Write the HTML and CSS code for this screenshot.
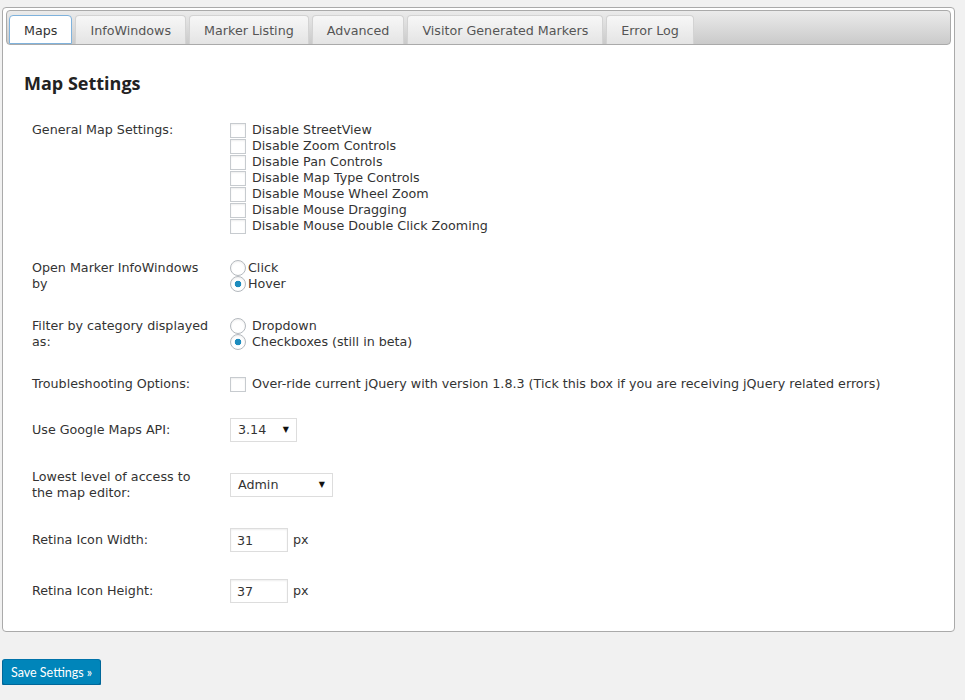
FILE: index.html
```html
<!DOCTYPE html>
<html lang="en">
<head>
  <meta charset="UTF-8" />
  <title>Map Settings</title>
  <link rel="stylesheet" href="styles.css">
</head>
<body>
  <div class="wrap">

    <!-- Tabs -->
    <div class="tabs">
      <ul class="tab-nav">
        <li class="tab active">Maps</li>
        <li class="tab">InfoWindows</li>
        <li class="tab">Marker Listing</li>
        <li class="tab">Advanced</li>
        <li class="tab">Visitor Generated Markers</li>
        <li class="tab">Error Log</li>
      </ul>

      <!-- Maps panel -->
      <div class="tab-panel">
        <h3>Map Settings</h3>

        <div class="form-rows">
          <div class="form-row">
            <div class="row-label">General Map Settings:</div>
            <div class="row-field">
              <label class="opt"><input type="checkbox" />Disable StreetView</label>
              <label class="opt"><input type="checkbox" />Disable Zoom Controls</label>
              <label class="opt"><input type="checkbox" />Disable Pan Controls</label>
              <label class="opt"><input type="checkbox" />Disable Map Type Controls</label>
              <label class="opt"><input type="checkbox" />Disable Mouse Wheel Zoom</label>
              <label class="opt"><input type="checkbox" />Disable Mouse Dragging</label>
              <label class="opt"><input type="checkbox" />Disable Mouse Double Click Zooming</label>
            </div>
          </div>

          <div class="form-row">
            <div class="row-label">Open Marker InfoWindows by</div>
            <div class="row-field">
              <label class="opt tight"><input type="radio" name="open_by" />Click</label>
              <label class="opt tight"><input type="radio" name="open_by" checked />Hover</label>
            </div>
          </div>

          <div class="form-row">
            <div class="row-label">Filter by category displayed as:</div>
            <div class="row-field">
              <label class="opt"><input type="radio" name="filter_as" />Dropdown</label>
              <label class="opt"><input type="radio" name="filter_as" checked />Checkboxes (still in beta)</label>
            </div>
          </div>

          <div class="form-row">
            <div class="row-label">Troubleshooting Options:</div>
            <div class="row-field">
              <label class="opt"><input type="checkbox" />Over-ride current jQuery with version 1.8.3 (Tick this box if you are receiving jQuery related errors)</label>
            </div>
          </div>

          <div class="form-row control">
            <div class="row-label">Use Google Maps API:</div>
            <div class="row-field">
              <div class="select api-select"><span>3.14</span><span class="arrow">▼</span></div>
            </div>
          </div>

          <div class="form-row control">
            <div class="row-label">Lowest level of access to the map editor:</div>
            <div class="row-field">
              <div class="select access-select"><span>Admin</span><span class="arrow">▼</span></div>
            </div>
          </div>

          <div class="form-row control">
            <div class="row-label">Retina Icon Width:</div>
            <div class="row-field inline">
              <input type="text" class="small-text" value="31" /><span class="unit">px</span>
            </div>
          </div>

          <div class="form-row control">
            <div class="row-label">Retina Icon Height:</div>
            <div class="row-field inline">
              <input type="text" class="small-text" value="37" /><span class="unit">px</span>
            </div>
          </div>
        </div>
      </div>
    </div>

    <button class="button-primary">Save Settings »</button>
  </div>
</body>
</html>
```

FILE: styles.css
```css
body {
  margin: 0;
  background-color: #f1f1f1;
  font-family: "DejaVu Sans", Verdana, sans-serif;
  font-size: 12.7px;
  color: #333;
}

.wrap {
  padding: 7px 10px 0 2px;
}

/* Tabs */
.tabs {
  background: #ffffff;
  border: 1px solid #aaaaaa;
  border-radius: 4px;
  padding: 2px 3px 3px;
}

.tab-nav {
  display: flex;
  gap: 3px;
  margin: 0;
  padding: 4px 2px 0;
  list-style: none;
  border: 1px solid #aaaaaa;
  border-radius: 4px;
  background: linear-gradient(#ebebeb, #cacaca);
}

.tab {
  height: 28px;
  line-height: 30px;
  padding: 0 14px;
  border: 1px solid #d3d3d3;
  border-bottom: none;
  border-radius: 4px 4px 0 0;
  background: linear-gradient(#f7f7f7, #e4e4e4);
  color: #555;
  cursor: pointer;
}

.tab.active {
  height: 27px;
  border: 1px solid #7fb2dc;
  background: #ffffff;
  color: #333;
}

/* Panel */
.tab-panel {
  padding: 27px 18px 25px;
}

.tab-panel h3 {
  margin: 0 0 28px;
  font-family: "Open Sans", sans-serif;
  font-size: 18px;
  font-weight: 700;
  line-height: 22px;
  color: #222;
}

.form-rows {
  display: flex;
  flex-direction: column;
  gap: 26px;
  padding-left: 8px;
}

.form-row {
  display: flex;
  align-items: flex-start;
  line-height: 16px;
}

.form-row.control {
  align-items: center;
}

.form-row.control + .form-row.control {
  margin-top: 1px;
}

.row-label {
  flex: 0 0 182px;
  margin-right: 16px;
}

.row-field.inline {
  display: flex;
  align-items: center;
}

.opt {
  display: flex;
  align-items: center;
  height: 16px;
}

.opt input {
  appearance: none;
  box-sizing: border-box;
  width: 16px;
  height: 15px;
  margin: 0 6px 0 0;
  border: 1px solid #c7cbcf;
  background: #ffffff;
  box-shadow: inset 0 1px 2px rgba(0,0,0,0.07);
  flex-shrink: 0;
}

.opt input[type="radio"] {
  width: 16px;
  height: 16px;
  border-radius: 50%;
  border-color: #b4b9be;
}

.opt input[type="radio"]:checked {
  background: radial-gradient(circle, #1e8cbe 0 3px, #ffffff 3.6px);
}

.opt.tight input {
  margin-right: 2px;
}

/* Selects and text fields */
.select {
  box-sizing: border-box;
  display: flex;
  justify-content: space-between;
  align-items: center;
  height: 24px;
  padding: 0 7px 0 7px;
  border: 1px solid #dddddd;
  background: #ffffff;
  color: #333;
}

.select .arrow {
  font-size: 8px;
  color: #111;
}

.api-select {
  width: 67px;
}

.access-select {
  width: 103px;
}

.small-text {
  box-sizing: border-box;
  width: 58px;
  height: 24px;
  margin: 0;
  padding: 0 6px;
  border: 1px solid #dddddd;
  box-shadow: inset 0 1px 2px rgba(0,0,0,0.07);
  font-family: "DejaVu Sans", Verdana, sans-serif;
  font-size: 12.7px;
  color: #333;
}

.unit {
  margin-left: 5px;
}

/* Save button */
.button-primary {
  margin-top: 27px;
  height: 26px;
  padding: 0 8px;
  border: 1px solid #0073aa;
  border-color: #0073aa #006799 #006799;
  border-radius: 3px;
  background: #0085ba;
  box-shadow: 0 1px 0 #006799;
  color: #ffffff;
  font-family: Lato, sans-serif;
  font-size: 12.5px;
  cursor: pointer;
}
```
